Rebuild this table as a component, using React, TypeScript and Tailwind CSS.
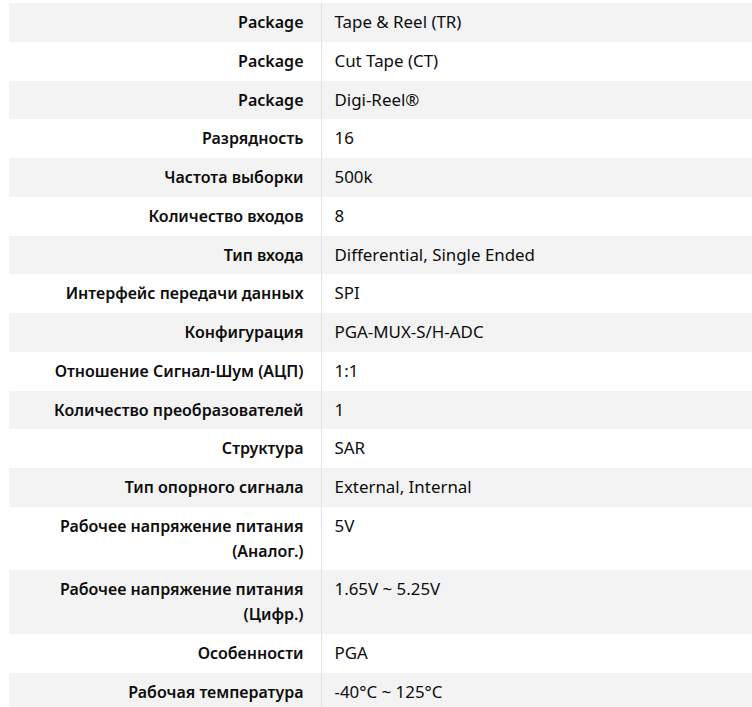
const rows: [string, string][] = [
  ["Package", "Tape & Reel (TR)"],
  ["Package", "Cut Tape (CT)"],
  ["Package", "Digi-Reel®"],
  ["Разрядность", "16"],
  ["Частота выборки", "500k"],
  ["Количество входов", "8"],
  ["Тип входа", "Differential, Single Ended"],
  ["Интерфейс передачи данных", "SPI"],
  ["Конфигурация", "PGA-MUX-S/H-ADC"],
  ["Отношение Сигнал-Шум (АЦП)", "1:1"],
  ["Количество преобразователей", "1"],
  ["Структура", "SAR"],
  ["Тип опорного сигнала", "External, Internal"],
  ["Рабочее напряжение питания (Аналог.)", "5V"],
  ["Рабочее напряжение питания (Цифр.)", "1.65V ~ 5.25V"],
  ["Особенности", "PGA"],
  ["Рабочая температура", "-40°C ~ 125°C"],
];

export default function App() {
  return (
    <div className="min-h-screen bg-white pt-[3px] pl-[9px] font-['Noto_Sans',sans-serif] leading-[24.75px] text-[#0d0d0d]">
      <table className="w-full border-collapse">
        <tbody>
          {rows.map(([label, value], i) => (
            <tr key={i} className={i % 2 === 0 ? "bg-[#f3f3f3]" : "bg-white"}>
              <th className="w-[312px] border-r border-[#e2e2e2] py-[7px] pl-4 pr-[17px] text-right align-top text-[16px] font-semibold">
                {label}
              </th>
              <td className="py-[7px] pl-[13px] pr-4 text-left align-top text-[16.9px] font-normal">{value}</td>
            </tr>
          ))}
        </tbody>
      </table>
    </div>
  );
}
